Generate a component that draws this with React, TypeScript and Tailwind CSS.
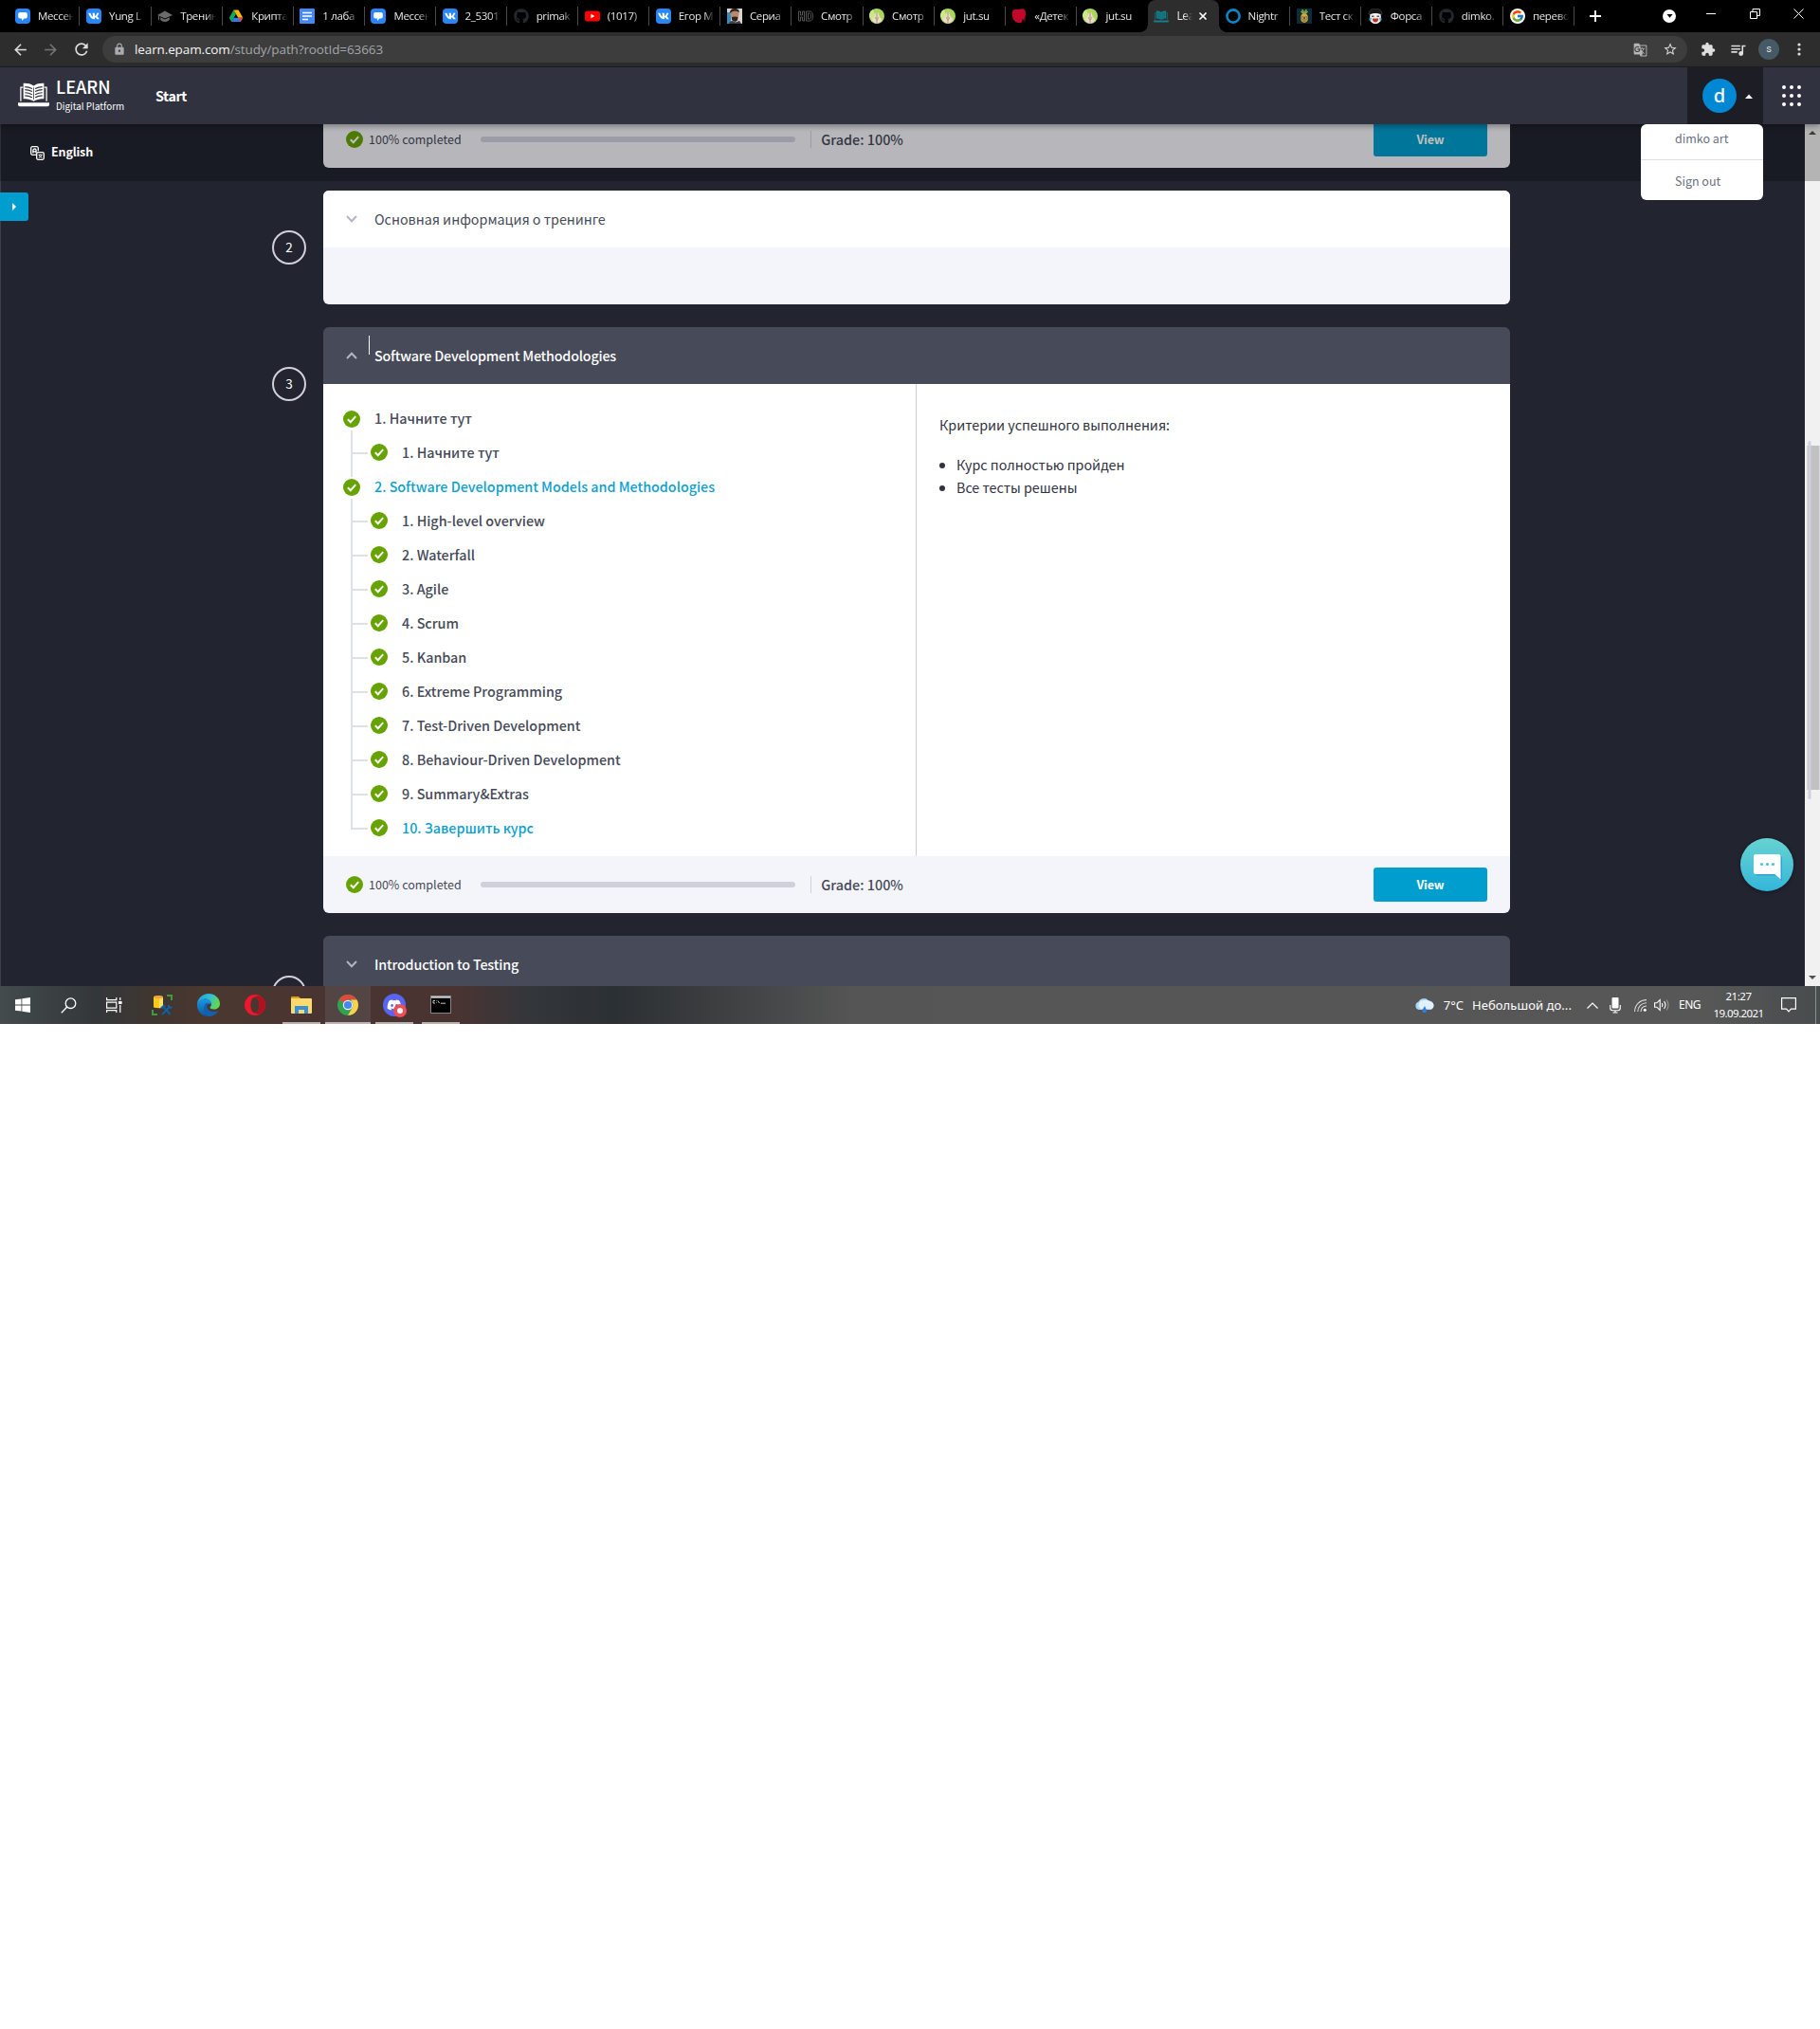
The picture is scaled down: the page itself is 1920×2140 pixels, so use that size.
import React from "react";
import { FaVk, FaGithub, FaDiscord } from "react-icons/fa";
import { FcGoogle } from "react-icons/fc";
import { MdArrowBack, MdArrowForward, MdRefresh, MdLock, MdStarBorder, MdExtension, MdQueueMusic, MdGTranslate } from "react-icons/md";

type P = { className?: string; children?: React.ReactNode };
const T = ({ className = "", children }: P) => (
  <span className={"inline-block whitespace-nowrap " + className}>{children}</span>
);

const Messenger = () => (
  <svg viewBox="0 0 16 16" className="size-4">
    <rect width="16" height="16" rx="4" fill="#2a85f8" />
    <path d="M5 4h6a1.8 1.8 0 0 1 1.8 1.8v3A1.8 1.8 0 0 1 11 10.600H9.500L7 13v-2.400H5A1.800 1.800 0 0 1 3.200 8.800v-3A1.800 1.800 0 0 1 5 4z" fill="#fff" />
  </svg>
);
const Vk = () => (
  <span className="flex size-4 items-center justify-center rounded-[4px] bg-[#2787f5]">
    <FaVk className="size-3 text-white" />
  </span>
);
const Cap = () => (
  <svg viewBox="0 0 16 16" className="size-4" fill="#6b6b6b">
    <path d="M8 2.500 16 7l-8 3.600L0 7z" />
    <path d="M3.200 9.200 8 11.500l4.800-2.300v2.600C11.500 13.200 10 14 8 14s-3.500-.8-4.800-2.200z" />
    <path d="M1 7.500h1.100V12H1z" />
  </svg>
);
const Drive = () => (
  <svg viewBox="0 0 16 16" className="size-4">
    <path d="M5.500 1.500 0.800 9.800 3.200 14 8 5.800z" fill="#0da960" />
    <path d="M5.500 1.500h5l4.800 8.300h-5z" fill="#ffba00" />
    <path d="M3.200 14h9.600l2.500-4.200H5.600z" fill="#2f7de8" />
    <path d="M12.800 14l2.500-4.200h-5z" fill="#e8453c" />
  </svg>
);
const Docs = () => (
  <svg viewBox="0 0 16 16" className="size-4">
    <rect width="16" height="16" rx="1" fill="#4688f4" />
    <path d="M3 4.500h10M3 8h10M3 11.500h6" stroke="#fff" strokeWidth="1.600" />
  </svg>
);
const Youtube = () => (
  <svg viewBox="0 0 16 16" className="size-4">
    <rect y="2.500" width="16" height="11" rx="2.800" fill="#f00" />
    <path d="M6.400 5.700v4.600L10.400 8z" fill="#fff" />
  </svg>
);
const Photo = () => (
  <svg viewBox="0 0 16 16" className="size-4">
    <rect width="16" height="16" fill="#d9d3cc" />
    <path d="M0 4h4v12H0z" fill="#2d8fc4" />
    <path d="M3 5c0-3 2-5 5-5s5 2 4.500 6L11 12l-2.500 2L5 12z" fill="#b98a72" />
    <path d="M3 5C3 1.500 5 0 8 0s5 1 4.800 4C10 2 6 2.500 4.500 4zM5 9l3-.6L11.500 9 11 12.500 8.500 14 5 12z" fill="#33241e" />
    <path d="M2 16c0-2 2-3 4-3l3 1.500L13 13l2 3z" fill="#3a4148" />
  </svg>
);
const Hd = () => (
  <svg viewBox="0 0 16 16" className="size-4" fill="none" stroke="#5c5c5c" strokeWidth=".9">
    <path d="M.5 3v10h2V9h2v4h2V3h-2v4h-2V3zM8.500 3v10H12c2.500 0 3.500-1.500 3.500-5S14.500 3 12 3zM10.500 5H12c1 0 1.500 1 1.500 3s-.5 3-1.500 3h-1.500z" />
  </svg>
);
const Jut = () => (
  <svg viewBox="0 0 16 16" className="size-4">
    <circle cx="8" cy="8" r="8" fill="#a9d858" />
    <path d="M0 8a8 8 0 0 1 4-7l2 6-3 6z" fill="#c9ea86" />
    <path d="M7.600 2.500C6.500 4 6 6 5.500 8L2.500 11.500c1 2.300 3 3.900 5.100 4.300zM8.400 2.500C9.500 4 10 6 10.500 8l3 3.500c-1 2.300-3 3.900-5.100 4.300z" fill="#f0d9cd" />
    <path d="M8 3v12.500M6.200 9l1.300 3M9.800 9l-1.300 3" stroke="#a98b80" strokeWidth=".7" />
  </svg>
);
const RedBlob = () => (
  <svg viewBox="0 0 16 16" className="size-4">
    <path d="M2 1.500C5-.3 8 1.500 11 .3c2.500-.4 4 1.500 4 5 0 3-1 6-2.500 8 .3-2-.5-3-1-2 .5 2-1 4-2.500 4C4 15.500.300 11 .800 5 1 3.500 1.300 2 2 1.500z" fill="#c3092a" />
    <path d="M13 11c1-.5 1.500-2 1.500-4 .8 2.500.5 6-1 8z" fill="#5a0d18" />
  </svg>
);
const Ring = () => (
  <svg viewBox="0 0 16 16" className="size-4">
    <circle cx="8" cy="8" r="6.600" fill="none" stroke="#0b85c4" strokeWidth="2.600" />
  </svg>
);
const Pineapple = () => (
  <svg viewBox="0 0 16 16" className="size-4">
    <rect width="16" height="16" fill="#0f2b3a" />
    <path d="M6 1l2 3 2-3 .5 4h-5zM4 3l2 2M12 3l-2 2" fill="#6aa944" stroke="#6aa944" />
    <ellipse cx="8" cy="10" rx="4" ry="5" fill="#d9a63a" />
    <path d="M5 9h2.500v2H5zM8.500 9H11v2H8.500zM6.500 13h3" fill="#f3ead0" stroke="#3d3016" strokeWidth=".7" />
  </svg>
);
const Face = () => (
  <svg viewBox="0 0 16 16" className="size-4">
    <path d="M1 6C1 2 4 0 8 0s7 2 7 6l-2 1H3z" fill="#17181a" stroke="#4a4a4a" strokeWidth=".6" />
    <path d="M2.500 6c3-1.500 8-1.500 11 0l.5 4c0 4-3 6-6 6s-6-2-6-6z" fill="#f2efec" />
    <path d="M4 8.200h2.500M9.500 8.200H12" stroke="#111" strokeWidth="1" />
    <path d="M4.800 10.500h6.400c0 2.500-1.500 4-3.200 4s-3.200-1.500-3.200-4z" fill="#b9332b" />
    <path d="M2 9.500l2 .5-1 3.500C1.500 13 1 11 2 9.500zM14 9.500l-2 .5 1 3.500c1.500-.5 2-2.500 1-4z" fill="#45aede" />
  </svg>
);
const Book = ({ className = "" }: { className?: string }) => (
  <svg viewBox="0 0 34 26" className={className} fill="none" stroke="currentColor">
    <path d="M3 20V5h2.500M31 20V5h-2.500" strokeWidth="1.300" />
    <path d="M5.800.5C10 .3 14 1 17 3.200 20 1 24 .3 28.200.5V17.300c-3.700 0-8 .6-11.200 2.700-3.200-2.100-7.500-2.700-11.200-2.700z" fill="currentColor" stroke="none" />
    <g strokeWidth="1.200" stroke="var(--gap,#303240)">
      <path d="M17 5V18" strokeWidth=".8" />
      <path d="M7.500 4.300c2.800.1 5.500.8 7.800 2M7.500 7.500c2.800.1 5.500.8 7.800 2M7.500 10.700c2.800.1 5.500.8 7.800 2M7.500 13.900c2.800.1 5.500.8 7.800 2M26.500 4.300c-2.800.1-5.500.8-7.800 2M26.500 7.500c-2.800.1-5.500.8-7.800 2M26.500 10.700c-2.800.1-5.500.8-7.800 2M26.500 13.900c-2.800.1-5.500.8-7.800 2" />
    </g>
    <path d="M0 21.500h34v2a2 2 0 0 1-2 2H2a2 2 0 0 1-2-2z" fill="currentColor" stroke="none" />
  </svg>
);

const tabs: { icon: React.ReactNode; label: string; active?: boolean }[] = [
  { icon: <Messenger />, label: "Мессен" },
  { icon: <Vk />, label: "Yung L" },
  { icon: <Cap />, label: "Тренин" },
  { icon: <Drive />, label: "Крипта" },
  { icon: <Docs />, label: "1 лаба" },
  { icon: <Messenger />, label: "Мессен" },
  { icon: <Vk />, label: "2_5301" },
  { icon: <FaGithub className="size-4 text-[#24292e]" />, label: "primak" },
  { icon: <Youtube />, label: "(1017)" },
  { icon: <Vk />, label: "Егор М" },
  { icon: <Photo />, label: "Сериа" },
  { icon: <Hd />, label: "Смотр" },
  { icon: <Jut />, label: "Смотр" },
  { icon: <Jut />, label: "jut.su" },
  { icon: <RedBlob />, label: "«Детек" },
  { icon: <Jut />, label: "jut.su" },
  { icon: <Book className="h-[13px] w-4 text-[#12808f] [--gap:#1d525c]" />, label: "Lea", active: true },
  { icon: <Ring />, label: "Nightr" },
  { icon: <Pineapple />, label: "Тест ск" },
  { icon: <Face />, label: "Форса" },
  { icon: <FaGithub className="size-4 text-[#24292e]" />, label: "dimko." },
  { icon: <FcGoogle className="size-4 rounded-full bg-white p-px" />, label: "перево" },
];

const TabStrip = () => (
  <div className="flex h-[34px] items-stretch bg-black pl-[9.400px] font-['Open_Sans',sans-serif] text-[12px] text-[#e8e8e8]">
    {tabs.map((t, i) =>
      t.active ? (
        <div key={i} className="relative flex w-[75.100px] shrink-0 items-center rounded-t-lg bg-[#2d2d2d] pl-[6.600px]">
          <span className="absolute bottom-0 -left-2 size-2 bg-[radial-gradient(circle_at_0_0,#000_7.500px,#2d2d2d_8px)]" />
          <span className="absolute -right-2 bottom-0 size-2 bg-[radial-gradient(circle_at_100%_0,#000_7.500px,#2d2d2d_8px)]" />
          <span className="flex w-4 justify-center">{t.icon}</span>
          <span className="ml-2 w-[17px] overflow-hidden whitespace-nowrap tracking-[-0.500px] [mask-image:linear-gradient(90deg,#000_50%,transparent)]">{t.label}</span>
          <svg viewBox="0 0 10 10" className="ml-1.5 size-2.5" stroke="#fff" strokeWidth="1.600"><path d="M1.500 1.500l7 7M8.500 1.500l-7 7" /></svg>
        </div>
      ) : (
        <div key={i} className="flex w-[75.100px] shrink-0 items-center pl-[6.600px]">
          <span className="flex w-4 justify-center">{t.icon}</span>
          <span className="ml-2 w-[38px] overflow-hidden text-[11.500px] whitespace-nowrap tracking-[-0.350px] [mask-image:linear-gradient(90deg,#000_70%,transparent)]">{t.label}</span>
          <span className={i === 15 ? "hidden" : "ml-auto h-5 w-px bg-[#4a4a4a]"} />
        </div>
      )
    )}
    <div className="flex flex-1 items-center pl-[15px]">
      <svg viewBox="0 0 14 14" className="size-3.5" stroke="#fff" strokeWidth="1.800"><path d="M7 1v12M1 7h12" /></svg>
      <span className="ml-[64px] flex size-3.5 items-center justify-center rounded-full bg-white">
        <svg viewBox="0 0 8 6" className="w-[7px]"><path d="M.5 1h7L4 5.500z" fill="#000" /></svg>
      </span>
      <svg viewBox="0 0 10 10" className="mb-1.5 ml-8 size-2.5" stroke="#fff"><path d="M0 5.500h10" /></svg>
      <svg viewBox="0 0 11 11" className="mb-1.5 ml-9 size-[11px]" stroke="#fff" fill="none"><path d="M.5 3.500h7v7h-7zM3 3.500v-3h7.500v7H7.500" /></svg>
      <svg viewBox="0 0 11 11" className="mb-1.5 ml-[35px] size-[11px]" stroke="#fff"><path d="M.5.5l10 10M10.500.5l-10 10" /></svg>
    </div>
  </div>
);

const Toolbar = () => (
  <div className="flex h-[37px] items-center border-b border-[#1f1f1f] bg-[#2d2d2d] text-[#dedede]">
    <MdArrowBack className="ml-3 size-[19px]" />
    <MdArrowForward className="ml-[13px] size-[19px] text-[#757575]" />
    <MdRefresh className="ml-[13px] size-5" />
    <div className="ml-3 flex h-7 w-[1672px] items-center rounded-full bg-[#3d3d3d]">
      <MdLock className="ml-[11px] size-3.5 text-[#a8abb0]" />
      <T className="ml-[9px] font-['Open_Sans',sans-serif] text-[13.500px] leading-7 tracking-[-0.115px] text-[#a3a6aa]">
        <span className="text-[#f4f4f4]">learn.epam.com</span>/study/path?rootId=63663
      </T>
      <MdGTranslate className="mr-4 ml-auto size-[15px] text-[#b5b5b5]" />
      <MdStarBorder className="mr-[10px] size-4 text-[#d6d6d6]" />
    </div>
    <MdExtension className="ml-3.5 size-4" />
    <MdQueueMusic className="ml-[14px] size-[19px]" />
    <span className="ml-[12px] flex size-[22px] items-center justify-center rounded-full bg-[#455a64] font-['Roboto',sans-serif] text-[11px]">s</span>
    <svg viewBox="0 0 4 14" className="ml-[19px] h-3.5 w-1" fill="currentColor"><circle cx="2" cy="2" r="1.600" /><circle cx="2" cy="7" r="1.600" /><circle cx="2" cy="12" r="1.600" /></svg>
  </div>
);

const SiteHeader = () => (
  <div className="relative z-20 flex h-[60px] bg-[#303240] text-white shadow-[0_2px_6px_rgba(0,0,0,0.35)]">
    <Book className="mt-4 ml-[19px] h-[26px] w-[33px]" />
    <div className="ml-[7px] flex w-[73px] flex-col items-start">
      <T className="mt-2 text-[18.200px] leading-[24px] font-medium">LEARN</T>
      <T className="mt-0.5 text-[9.900px] leading-[14px]">Digital Platform</T>
    </div>
    <T className="ml-8 text-[14.300px] leading-[60px] font-bold tracking-[-0.375px]">Start</T>
    <div className="ml-auto flex w-20 items-center bg-[#1d1d26]">
      <span className="ml-4 flex size-9 items-center justify-center rounded-full bg-[#0088d4] font-['Noto_Sans','Open_Sans',sans-serif] text-[20px] leading-9 font-medium">d</span>
      <svg viewBox="0 0 8 5" className="ml-[9px] h-[5px] w-2" fill="#fff"><path d="M0 5 4 .5 8 5z" /></svg>
    </div>
    <div className="flex w-[60px] items-center justify-center">
      <svg viewBox="0 0 20 22" className="h-[22px] w-5" fill="#fff">
        {[2, 10, 18].map((x) => [2, 11, 20].map((y) => <circle key={x + "-" + y} cx={x} cy={y} r="2" />))}
      </svg>
    </div>
    <div className="absolute top-[60px] left-[1731px] flex h-20 w-[129px] flex-col rounded-md bg-white pl-9 text-[#6c6f80]">
      <T className="h-[37px] shrink-0 self-start text-[12.500px] leading-[29px]">dimko art</T>
      <div className="-ml-9 h-px shrink-0 bg-[#dcdde8]" />
      <T className="shrink-0 self-start text-[12.500px] leading-[44px]">Sign out</T>
    </div>
  </div>
);

const Check = ({ className = "" }: { className?: string }) => (
  <svg viewBox="0 0 18 18" className={"size-[18px] shrink-0 " + className}>
    <circle cx="9" cy="9" r="9" fill="#67a300" />
    <path d="M4.800 9.200 7.800 12.200 13.200 6.200" fill="none" stroke="#fff" strokeWidth="2" />
  </svg>
);
const Chevron = ({ up, color }: { up?: boolean; color: string }) => (
  <svg viewBox="0 0 12 8" className="ml-6 h-2 w-3" fill="none" stroke={color} strokeWidth="2">
    <path d={up ? "M1 7l5-5.200L11 7" : "M1 1l5 5.200L11 1"} />
  </svg>
);

const CardFooter = ({ top }: { top?: boolean }) => (
  <div className={top ? "-mt-3.5 flex h-[60px] items-center bg-[#f4f5fa] text-[#464a58]" : "flex h-[60px] items-center bg-[#f4f5fa] text-[#464a58]"}>
    <Check className="ml-6" />
    <T className="ml-1.5 text-[12.500px] leading-5">100% completed</T>
    <div className="ml-[20.500px] h-1.5 w-[332px] rounded-full bg-[#cfd0dc]" />
    <div className="ml-4 h-[18px] w-px bg-[#cfd0dc]" />
    <T className="ml-2.5 text-[14.400px] leading-5 font-medium">Grade: 100%</T>
    <div className="mr-6 ml-auto flex h-9 w-[120px] items-center justify-center rounded-[3px] bg-[#009ece] text-white">
      <T className="text-[12.500px] font-bold tracking-[-0.100px]">View</T>
    </div>
  </div>
);

const StepNumber = ({ n }: { n: number }) => (
  <span className="absolute top-[42px] -left-[54px] flex size-9 items-center justify-center rounded-full border-2 border-[#cfd0dc] text-[13.500px] leading-none text-white">{n}</span>
);

const chapters = [
  { name: "1. Начните тут", link: false, kids: ["1. Начните тут"] },
  {
    name: "2. Software Development Models and Methodologies",
    link: true,
    kids: [
      "1. High-level overview",
      "2. Waterfall",
      "3. Agile",
      "4. Scrum",
      "5. Kanban",
      "6. Extreme Programming",
      "7. Test-Driven Development",
      "8. Behaviour-Driven Development",
      "9. Summary&Extras",
      "10. Завершить курс",
    ],
  },
];

const Tree = () => (
  <div className="w-[625px] pt-[19px] pl-[20px] text-[14.320px] leading-9 font-medium text-[#464a58]">
    {chapters.map((c) => (
      <div key={c.name}>
        <div className={c.link ? "flex h-9 items-center text-[#0e9fcd]" : "flex h-9 items-center"}>
          <Check className="mr-[15px] ml-px" />
          <T className="mb-0.5">{c.name}</T>
        </div>
        {c.kids.map((k, i) => {
          const last = i === c.kids.length - 1;
          return (
            <div key={k} className={last && c.link ? "flex h-9 items-center text-[#0e9fcd]" : "flex h-9 items-center"}>
              <div className="ml-[9px] h-full w-[18px]">
                <div className={i === 0 ? "-mt-1.5 h-[23px] w-0.5 bg-[#dfe1e9]" : "h-[17px] w-0.5 bg-[#dfe1e9]"} />
                <div className="h-0.5 bg-[#dfe1e9]" />
                <div className={last ? (c.link ? "hidden" : "h-[24px] w-0.5 bg-[#dfe1e9]") : "h-[17px] w-0.5 bg-[#dfe1e9]"} />
              </div>
              <Check className="mr-[15px] mb-0.5 ml-[3px]" />
              <T className="mb-0.5">{k}</T>
            </div>
          );
        })}
      </div>
    ))}
  </div>
);

const Content = () => (
  <div className="relative flex h-[909px] overflow-hidden bg-[#222430]">
    <div className="flex w-[341px] shrink-0 border-l border-[#3c3f4c] pt-[72px]">
      <div className="-ml-px flex h-[30px] w-[30px] items-center justify-center rounded-r-[3px] bg-[#009ece]">
        <svg viewBox="0 0 4 8" className="h-2 w-1" fill="#fff"><path d="M0 0l4 4-4 4z" /></svg>
      </div>
    </div>
    <div className="flex w-[1252px] shrink-0 flex-col gap-6">
      <div className="h-[46px] shrink-0 overflow-hidden rounded-b-md"><CardFooter top /></div>
      <div className="relative h-[120px] shrink-0 rounded-md bg-[#f4f5fa]">
        <StepNumber n={2} />
        <div className="flex h-[60px] items-center rounded-t-md bg-white text-[#464a58]">
          <Chevron color="#b2b5c6" />
          <T className="ml-[18px] text-[14.300px] leading-[60px]">Основная информация о тренинге</T>
        </div>
      </div>
      <div className="relative h-[618px] shrink-0">
        <StepNumber n={3} />
        <div className="overflow-hidden rounded-md">
          <div className="relative flex h-[60px] items-center bg-[#474a59] text-white">
            <Chevron up color="#b2b5c6" />
            <T className="ml-[18px] text-[14.300px] leading-[60px] font-medium tracking-[-0.194px]">Software Development Methodologies</T>
            <span className="absolute top-[9px] left-12 h-5 w-px bg-white" />
          </div>
          <div className="flex h-[498px] bg-white">
            <Tree />
            <div className="flex-1 border-l border-[#cfd0dc] pt-[31px] pl-[24px] text-[14.300px] leading-6 text-[#303240]">
              <p className="leading-6">Критерии успешного выполнения:</p>
              <ul className="mt-[18px] list-disc pl-[18px]">
                <li>Курс полностью пройден</li>
                <li>Все тесты решены</li>
              </ul>
            </div>
          </div>
          <CardFooter />
        </div>
      </div>
      <div className="relative h-[120px] shrink-0">
        <StepNumber n={4} />
        <div className="flex h-[60px] items-center rounded-t-md bg-[#474a59] text-white">
          <Chevron color="#b2b5c6" />
          <T className="ml-[18px] text-[14.300px] leading-[60px] font-medium tracking-[-0.172px]">Introduction to Testing</T>
        </div>
      </div>
    </div>
    <div className="ml-auto flex w-4 flex-col items-center bg-[#f1f1f1]">
      <svg viewBox="0 0 8 4" className="mt-[7px] h-1 w-2" fill="#505050"><path d="M0 4l4-4 4 4z" /></svg>
      <div className="relative mt-[328px] h-[363px] w-[13px] translate-x-[0.500px] bg-[#c1c1c1]">
        <span className="absolute -top-[5px] left-px h-[378px] w-[3px] rounded-full bg-[#ced1dd]" />
      </div>
      <svg viewBox="0 0 8 4" className="mt-auto mb-[7px] h-1 w-2" fill="#505050"><path d="M0 0l4 4 4-4z" /></svg>
    </div>
    <div className="absolute top-0 left-0 flex h-[60px] w-full items-center bg-black/25 text-white">
      <svg viewBox="0 0 15 15" className="ml-8 size-[15px]" fill="none" stroke="#fff" strokeWidth="1.300">
        <path d="M6.700 9.300H2.200A1.500 1.500 0 0 1 .7 7.800V2.200A1.500 1.500 0 0 1 2.200.7h4.600a1.500 1.500 0 0 1 1.500 1.500v3" />
        <path d="M2.900 7.500V4.500c0-2 3.200-2 3.200 0v3M2.900 5.800h3.200" />
        <path d="M8.200 6.700h4.600a1.500 1.500 0 0 1 1.500 1.500v4.600a1.500 1.500 0 0 1-1.500 1.500H8.200a1.500 1.500 0 0 1-1.500-1.500V8.200a1.500 1.500 0 0 1 1.500-1.500z" />
        <path d="M8.600 9.200h3.900M12 9.400c-.6 1.500-1.600 2.600-3.200 3.100M9.200 9.800c.7 1.300 1.600 2.200 3.100 2.700" strokeWidth="1" />
      </svg>
      <T className="mb-0.5 ml-[7px] text-[12.500px] leading-5 font-bold tracking-[-0.156px]">English</T>
    </div>
    <div className="absolute top-[753px] left-[1836px] flex size-14 items-center justify-center rounded-full bg-gradient-to-b from-[#66d3d2] to-[#32b6da] shadow-[0_1px_4px_rgba(0,0,0,0.4)]">
      <svg viewBox="0 0 56 56" className="size-14">
        <path d="M17 19h26a2 2 0 0 1 1 2v24.500l-6-6H18a2 2 0 0 1-2-2z" fill="#2ba5d6" />
        <path d="M16.500 17h23.500a2.500 2.500 0 0 1 2.500 2.500V43.500L36.500 38h-20a2.500 2.500 0 0 1-2.500-2.500v-16A2.500 2.500 0 0 1 16.500 17z" fill="#fff" />
        <circle cx="22.500" cy="27.500" r="1.600" fill="#4ac4d6" /><circle cx="28.500" cy="27.500" r="1.600" fill="#4ac4d6" /><circle cx="34.500" cy="27.500" r="1.600" fill="#4ac4d6" />
      </svg>
    </div>
  </div>
);

const Cell = ({ children, className = "" }: P) => <div className={"flex h-10 items-center justify-center " + className}>{children}</div>;

const Taskbar = () => (
  <div className="flex h-10 bg-[linear-gradient(90deg,#434b4d_0px,#33373a_100px,#403630_165px,#4a3830_220px,#4a3431_330px,#4a3431_480px,#33363a_560px,#2b3034_650px,#3a3c3e_740px,#555_900px,#575757_1800px,#474c4d_1920px)] font-['Noto_Sans',sans-serif] text-[12px] text-white">
    <Cell className="w-12"><svg viewBox="0 0 16 16" className="size-4" fill="#fff"><path d="M0 2.300 6.500 1.400v6.200H0zM7.300 1.300 16 0v7.600H7.300zM0 8.400h6.500v6.200L0 13.700zM7.300 8.400H16V16l-8.700-1.200z" /></svg></Cell>
    <Cell className="w-12"><svg viewBox="0 0 17 17" className="size-[17px]" fill="none" stroke="#fff" strokeWidth="1.300"><circle cx="10.500" cy="6.200" r="5.300" /><path d="M6.800 10 .8 16.200" /></svg></Cell>
    <Cell className="w-12"><svg viewBox="0 0 17 16" className="h-4 w-[17px]" fill="none" stroke="#fff" strokeWidth="1.200"><path d="M.6 0v2.600h10.200V0M.6 5.200h10.200v6H.6zM.6 16v-2.300h10.200V16M14.800 0v3M14.800 8v8" /><path d="M13 4h3.600v3H13z" fill="#fff" stroke="none" /></svg></Cell>
    <Cell className="w-[54px]">
      <svg viewBox="0 0 22 22" className="size-[22px]">
        <path d="M2 2.500C2 1 12 1 12 2.500V13c0 1.600-10 1.600-10 0z" fill="#ffc91a" />
        <path d="M8 4h4v9.500c-1 .6-2.500.8-4 .8z" fill="#ffe06a" />
        <ellipse cx="7" cy="2.600" rx="5" ry="1.600" fill="#f6a04a" />
        <path d="M16 1h5v5M1 16v5h5" fill="none" stroke="#3f9b3f" strokeWidth="2" />
        <path d="M12.500 13l7 8M18.500 13.500 11 21" stroke="#0c62a6" strokeWidth="1.900" />
        <path d="M10 14.200l3.800-3.200M18 11v2.500h3.500" fill="none" stroke="#0c62a6" strokeWidth="2" />
      </svg>
    </Cell>
    <Cell className="w-11">
      <svg viewBox="0 0 24 24" className="size-6">
        <defs>
          <linearGradient id="edge-top" x1="0" y1="0" x2="1" y2="0.300"><stop offset="0" stopColor="#1b9de2" /><stop offset=".6" stopColor="#35c1d0" /><stop offset="1" stopColor="#62d84e" /></linearGradient>
          <linearGradient id="edge-left" x1="0" y1="0" x2="0" y2="1"><stop offset="0" stopColor="#1b98e0" /><stop offset="1" stopColor="#0c59a4" /></linearGradient>
        </defs>
        <path d="M0 12C0 5 5.500 0 12 0s12 5 12 10.500c0 4-3 6-6.500 6-2.500 0-4-1-4-2 0-.7 1.500-1.300 1.500-3.500C15 8 12 5.500 8.500 5.500 4 5.500 1 8.500 0 12z" fill="url(#edge-top)" />
        <path d="M0 12C.5 8 4 5.500 8.500 5.500c3.500 0 6.500 2.500 6.500 5.500C10 10 8.500 13 8.500 15c0 4 4 7.500 8.500 6-1.500 2-3.500 3-5.500 3C5 24 0 18.500 0 12z" fill="url(#edge-left)" />
        <path d="M9 10.500C7.500 12 7 14 7 16c0 4 2.500 7 5 8 5 0 8.500-2.500 10.300-6-3 1.500-7 1.500-9.800-.5-1.500-1-2.500-2.500-2-4.500.2-1.200 1-1.800 2.500-2-1.500-1-3-1.300-4-.5z" fill="#1460ad" />
      </svg>
    </Cell>
    <Cell className="w-[54px]">
      <svg viewBox="0 0 22 22" className="size-[22px]" fillRule="evenodd">
        <path d="M11 0a11 11 0 1 0 0 22 11 11 0 0 0 0-22zM11 2.500c2.600 0 4.600 3.600 4.600 8.500s-2 8.500-4.600 8.500S6.400 15.900 6.400 11 8.400 2.500 11 2.500z" fill="#f0172d" />
        <path d="M11 2.500C13 .8 16 1 18.400 2.900a11 11 0 0 1 0 16.200C16 21 13 21.200 11 19.500c2.600 0 4.600-3.600 4.600-8.500S13.600 2.500 11 2.500z" fill="#b3101f" />
      </svg>
    </Cell>
    <Cell className="relative ml-0.5 w-10">
      <svg viewBox="0 0 22 20" className="h-5 w-[22px]"><path d="M0 2a1 1 0 0 1 1-1h7l2 2H0z" fill="#e29b16" /><path d="M0 3h21a1 1 0 0 1 1 1v14a1 1 0 0 1-1 1H1a1 1 0 0 1-1-1z" fill="#ffd96a" /><path d="M4 19v-8h14v8h-4v-4H8v4z" fill="#3492dc" /></svg>
      <span className="absolute bottom-0 left-0 h-0.5 w-10 bg-[#b9b1af]" />
    </Cell>
    <Cell className="relative ml-[5px] w-12 bg-[#524543]">
      <svg viewBox="0 0 22 22" className="size-[22px]">
        <circle cx="11" cy="11" r="11" fill="#31a350" />
        <path d="M11 11 1.500 5.500A11 11 0 0 1 20.500 5.500H11z" fill="#dd4b3e" />
        <path d="M20.500 5.500A11 11 0 0 1 11 22l4.800-8.500c1-2 .6-5-.8-6.500l-1-1.500z" fill="#ffd04a" />
        <circle cx="11" cy="11" r="5.200" fill="#f1f1f1" /><circle cx="11" cy="11" r="4.100" fill="#4688f1" />
      </svg>
      <span className="absolute bottom-0 left-0 h-0.5 w-12 bg-[#beb6b4]" />
    </Cell>
    <Cell className="relative ml-[5px] w-10">
      <span className="relative flex size-6 items-center justify-center rounded-full bg-[#5865f2]">
        <FaDiscord className="size-4 text-white" />
        <span className="absolute top-[11px] left-[11px] size-3.5 rounded-full border-[4px] border-[#ed4f55] bg-white" />
      </span>
      <span className="absolute bottom-0 left-0 h-0.5 w-10 bg-[#b9b1af]" />
    </Cell>
    <Cell className="relative ml-[9px] w-10">
      <svg viewBox="0 0 22 19" className="mb-0.5 h-[19px] w-[22px]"><path d="M0 0h22v19H0z" fill="#7f8588" /><path d="M1 3h20v15H1z" fill="#000" /><path d="M1 .8h20v1.500H1z" fill="#c9cdcf" /><path d="M5 5.500H3V8h2M6.500 5.500v.6M6.500 7.500V8M8 5.500l1.500 2.500M11 8.200h5" stroke="#ddd" strokeWidth=".9" fill="none" /></svg>
      <span className="absolute bottom-0 left-0 h-0.5 w-10 bg-[#b9b1af]" />
    </Cell>
    <div className="ml-auto flex items-center">
      <svg viewBox="0 0 22 16" className="h-4 w-[22px]"><path d="M5 13a5 4.500 0 0 1-.5-8.500A6 5.500 0 0 1 15 3.500a5 5 0 0 1 2.500 9.500z" fill="#a9d6fb" /><path d="M7 12a6 5 0 0 1 4-9 6 5 0 0 1 6 1.500c4 .5 5 6 1 7.500z" fill="#e3f1fd" /><path d="M11 9c-2 3-2.500 4-2.500 5a2.300 2.300 0 0 0 4.600 0c0-1-.6-2-2.100-5z" fill="#2f80d8" /></svg>
      <T className="ml-[9px] text-[13px] leading-5">7°C</T>
      <T className="ml-[9px] text-[13px] leading-5 tracking-[0.074px]">Небольшой до...</T>
      <svg viewBox="0 0 12 7" className="ml-4 h-[7px] w-3" fill="none" stroke="#fff" strokeWidth="1.200"><path d="M.5 6.500 6 1l5.500 5.500" /></svg>
      <svg viewBox="0 0 12 17" className="ml-3 h-[17px] w-3"><rect x="2.500" y="0" width="7" height="11.500" rx="1" fill="#fff" /><path d="M.7 8v3c0 2 1 2.700 2.500 2.700h5.600c1.500 0 2.500-.7 2.500-2.700V8M6 13.700v2M3.500 16h5" fill="none" stroke="#fff" strokeWidth="1.100" /></svg>
      <svg viewBox="0 0 13 13" className="ml-3.5 size-[13px]" fill="none" stroke="#d8d8d8" strokeWidth="1.100"><path d="M.6 13C.6 6 6 .6 13 .6M3.800 13c0-5.200 4-9.200 9.200-9.200M7 13c0-3.400 2.600-6 6-6" /><circle cx="11.300" cy="11.300" r="1.500" fill="#fff" stroke="none" /></svg>
      <svg viewBox="0 0 17 14" className="ml-2 h-3.5 w-[17px]" fill="none" stroke="#fff" strokeWidth="1.100"><path d="M.6 4.800h2.200l3.400-3.200v10.800L2.800 9.200H.6zM8.300 5c.8 1.200.8 2.800 0 4M10.500 3.200c1.700 2.200 1.700 5.400 0 7.600" /><path d="M13 1.500c2.700 3.200 2.700 7.800 0 11" stroke="#999" /></svg>
      <T className="ml-[9px] text-[12px] tracking-[-0.500px]">ENG</T>
      <div className="ml-[13px] flex w-[54px] flex-col items-center">
        <T className="text-[11.500px] leading-[18px] tracking-[-0.480px]">21:27</T>
        <T className="text-[11.500px] leading-[18px] tracking-[-0.580px]">19.09.2021</T>
      </div>
      <svg viewBox="0 0 16 16" className="ml-[18px] size-4" fill="none" stroke="#fff" strokeWidth="1.200"><path d="M.6.6h14.800v11.500h-5L8 14.800 5.600 12.100h-5z" /></svg>
      <span className="mr-1 ml-5 h-10 w-px bg-[#8b8f90]" />
    </div>
  </div>
);

export default function App() {
  return (
    <div className="h-[2140px] w-[1920px] overflow-hidden bg-white font-['Noto_Sans_CJK_SC',sans-serif]">
      <TabStrip />
      <Toolbar />
      <SiteHeader />
      <Content />
      <Taskbar />
    </div>
  );
}
